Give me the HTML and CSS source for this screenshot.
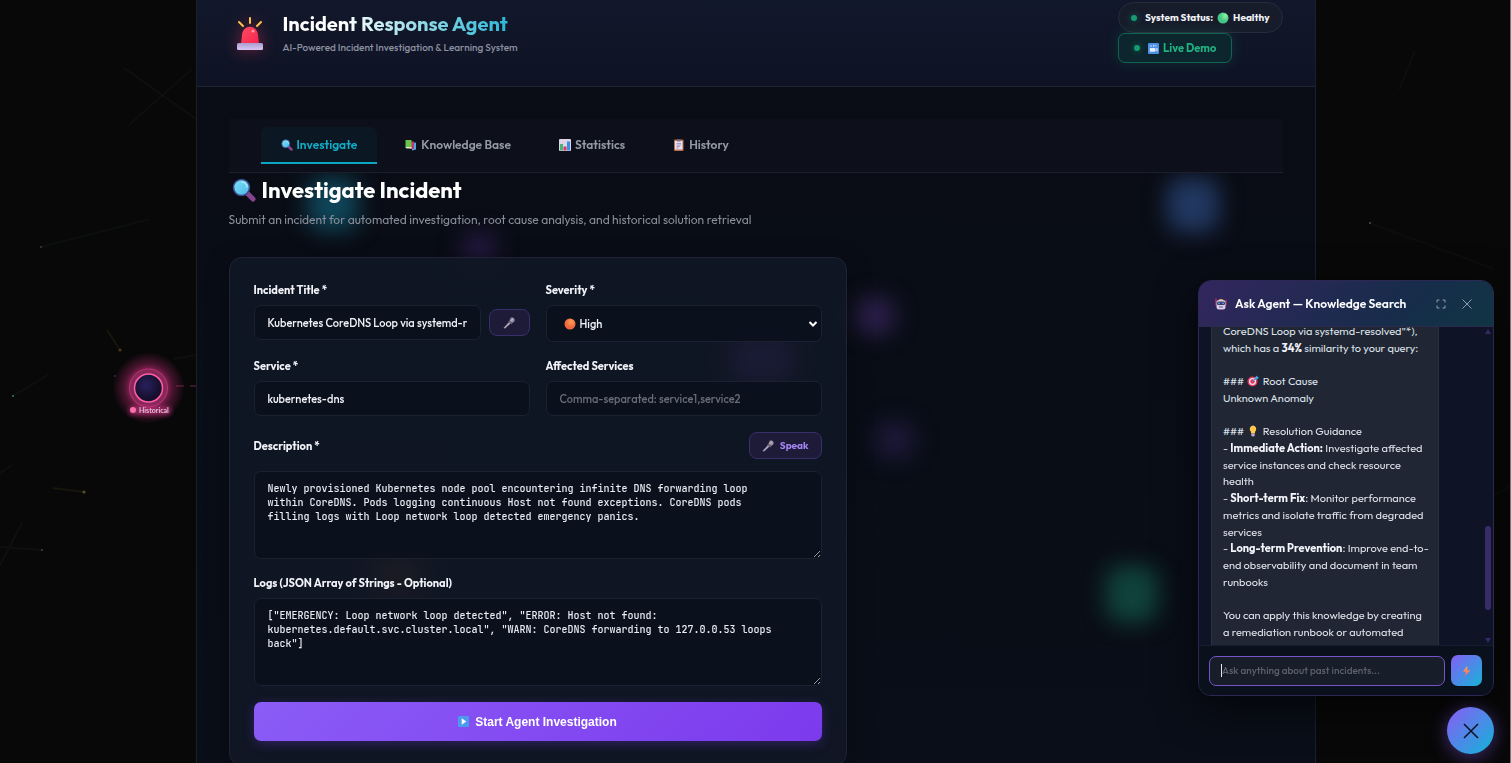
FILE: index.html
```html
<!DOCTYPE html>
<html lang="en">
<head>
<meta charset="utf-8">
<meta name="viewport" content="width=device-width, initial-scale=1">
<title>Incident Response Agent</title>
<link rel="stylesheet" href="styles.css">
</head>
<body>
<svg class="defs" aria-hidden="true">
  <defs>
    <linearGradient id="lens" x1="0" y1="0" x2="1" y2="1"><stop offset="0" stop-color="#7fe0f7"/><stop offset="1" stop-color="#4cb6ea"/></linearGradient>
    <linearGradient id="dome" x1="0" y1="0" x2="1" y2="1"><stop offset="0" stop-color="#ff4d62"/><stop offset="1" stop-color="#f5234f"/></linearGradient>
    <linearGradient id="base" x1="0" y1="0" x2="0" y2="1"><stop offset="0" stop-color="#a99bd0"/><stop offset="1" stop-color="#d9c8f3"/></linearGradient>
    <radialGradient id="greenball" cx=".7" cy=".3"><stop offset="0" stop-color="#8cf29b"/><stop offset="1" stop-color="#43c586"/></radialGradient>
    <radialGradient id="orangeball" cx=".6" cy=".3"><stop offset="0" stop-color="#ff9e55"/><stop offset="1" stop-color="#f0673c"/></radialGradient>
    <linearGradient id="bolt" x1="0" y1="0" x2="0" y2="1"><stop offset="0" stop-color="#ffb04a"/><stop offset="1" stop-color="#f2606a"/></linearGradient>
  </defs>
  <symbol id="i-search" viewBox="0 0 24 24"><path d="M15 15l6 6" stroke="#84458c" stroke-width="5" stroke-linecap="round"/><circle cx="9.500" cy="9.500" r="8" fill="url(#lens)" stroke="#3c4a8a" stroke-width="1.500"/><path d="M10 4a5 5 0 0 1 5 5" stroke="#a8edfb" stroke-width="1.500" fill="none" stroke-linecap="round"/></symbol>
  <symbol id="i-mic" viewBox="0 0 24 24"><path d="M1 22l11-12 3 3L4 23z" fill="#b3a5b9"/><path d="M10.500 9l6 6 2-3-5-5z" fill="#6c6677"/><path d="M13 6.500l5.500 5.500L23 8.500V4L19.500 1H16z" fill="#9890a1"/><path d="M15 8l6-5" stroke="#d0c8d6" stroke-width="1.500"/></symbol>
</svg>

<svg class="space" viewBox="0 0 1511 763" preserveAspectRatio="xMidYMid slice" aria-hidden="true">
  <defs>
    <radialGradient id="halo"><stop offset=".45" stop-color="#d83284" stop-opacity=".75"/><stop offset=".68" stop-color="#a52765" stop-opacity=".4"/><stop offset="1" stop-color="#a52765" stop-opacity="0"/></radialGradient>
    <radialGradient id="core" cx=".42" cy=".4"><stop offset="0" stop-color="#27205c"/><stop offset="1" stop-color="#170f2c"/></radialGradient>
    <filter id="soft" x="-30%" y="-100%" width="160%" height="300%"><feGaussianBlur stdDeviation="2"/></filter>
  </defs>
  <g fill="none" stroke-width="2">
    <path d="M124 68L196 119" stroke="#100f0c"/>
    <path d="M129 125L192 69M41 247L150 219" stroke="#0b0f0e"/>
    <path d="M107 330L120 350M53 488L84 492" stroke="#17150c"/>
    <path d="M13 396L48 375M0 473L12 465M0 547L42 550M0 565L22 523M174 359L196 355" stroke="#0e0f0e"/>
    <path d="M1415 51L1399 90M1370 223L1494 269M1494 496L1511 485" stroke="#0c0d0e"/>
    <path d="M176 386L196 386" stroke="#6d2547" stroke-width="1" stroke-dasharray="8 6"/>
  </g>
  <circle cx="13" cy="396" r="1" fill="#1c8a63"/><circle cx="120" cy="350" r="1.500" fill="#4c3c18"/><circle cx="84" cy="492" r="1.500" fill="#5b5422"/><circle cx="42" cy="550" r="1" fill="#3c443d"/><circle cx="41" cy="247" r="1" fill="#39413e"/><circle cx="115" cy="376" r="1" fill="#3a2b5c"/><circle cx="1370" cy="223" r="1" fill="#46525e"/>
  <circle cx="148.500" cy="388" r="36" fill="url(#halo)"/>
  <circle cx="148.500" cy="388" r="19" fill="#862858" stroke="#b93474"/>
  <circle cx="148.500" cy="388" r="14" fill="url(#core)" stroke="#ff5fa5" stroke-width="1.500"/>
  <rect x="129" y="406" width="42" height="9" rx="3" fill="#c8317d" opacity=".6" filter="url(#soft)"/>
  <circle cx="133" cy="410" r="3" fill="#f871ad"/>
  <text class="node-label" x="139" y="413">Historical</text>
</svg>

<div class="shell">
  <svg class="glows" viewBox="196 0 1120 763" preserveAspectRatio="xMidYMin slice" aria-hidden="true">
    <defs><filter id="haze" x="-100%" y="-100%" width="300%" height="300%" color-interpolation-filters="sRGB"><feGaussianBlur stdDeviation="11"/></filter></defs>
    <g filter="url(#haze)">
      <rect x="308" y="178" width="50" height="52" rx="14" fill="#10556c" opacity=".8"/>
      <rect x="1167" y="178" width="52" height="54" rx="14" fill="#263f6e" opacity=".85"/>
      <rect x="1106" y="566" width="52" height="56" rx="14" fill="#125045" opacity=".8"/>
      <rect x="856" y="298" width="38" height="36" rx="10" fill="#38255f" opacity=".75"/>
      <rect x="876" y="422" width="38" height="36" rx="10" fill="#2c2050" opacity=".6"/>
      <rect x="462" y="234" width="34" height="28" rx="10" fill="#34205a" opacity=".7"/>
      <rect x="732" y="334" width="60" height="48" rx="10" fill="#7848d8" opacity=".9"/>
      <rect x="372" y="556" width="52" height="40" rx="10" fill="#a0542c" opacity=".7"/>
    </g>
  </svg>

  <header class="top">
    <div class="brand">
      <svg class="siren" viewBox="0 0 28 34" aria-hidden="true"><path d="M3 5l4 4M14 1v5M25 5l-4 4" stroke="#ffc24a" stroke-width="2" stroke-linecap="round"/><path d="M5 27l1-9c1-11 15-11 16 0l1 9z" fill="url(#dome)"/><circle cx="17" cy="14" r="1.500" fill="#ff9a9d"/><rect x="1" y="26" width="26" height="7" rx="1.500" fill="url(#base)"/></svg>
      <div>
        <h1>Incident Response Agent</h1>
        <p>AI-Powered Incident Investigation &amp; Learning System</p>
      </div>
    </div>
    <div class="status">
      <div class="pill"><i class="dot"></i><span>System Status:</span><svg class="ic" viewBox="0 0 24 24" aria-hidden="true"><circle cx="12" cy="12" r="11" fill="url(#greenball)"/></svg><span>Healthy</span></div>
      <button class="demo" type="button"><i class="dot"></i><svg class="ic" viewBox="0 0 24 24" aria-hidden="true"><rect width="24" height="24" rx="2" fill="#4b8fe6"/><path d="M4 11h12v8H4z" fill="#e6eefb"/><path d="M17 12l4-1v8l-4-2zM5 5h3v3H5zM11 4h3v4h-3zM16 5h3v2h-3z" fill="#c4dafa"/></svg>Live Demo</button>
    </div>
  </header>

  <main>
    <nav class="tabs" aria-label="Sections">
      <button class="tab active" type="button"><svg class="ic" aria-hidden="true"><use href="#i-search"/></svg>Investigate</button>
      <button class="tab" type="button"><svg class="ic" viewBox="0 0 24 24" aria-hidden="true"><path d="M14 8l8-1v14l-8 2z" fill="#55a5ea"/><path d="M10 5h8v15h-8z" fill="#c03a68"/><path d="M1 2h12v16H1z" fill="#6cc24a"/><path d="M1 16h12v3H3z" fill="#d8e8d0"/></svg>Knowledge Base</button>
      <button class="tab" type="button"><svg class="ic" viewBox="0 0 24 24" aria-hidden="true"><rect width="24" height="24" rx="2" fill="#dfd3ea"/><path d="M2 10h6v13H2z" fill="#45b678"/><path d="M9 15h6v8H9z" fill="#d83660"/><path d="M16 5h6v18h-6z" fill="#3c8ee0"/></svg>Statistics</button>
      <button class="tab" type="button"><svg class="ic" viewBox="0 0 24 24" aria-hidden="true"><rect x="2" y="1" width="19" height="23" rx="2" fill="#b9704f"/><path d="M4 4h15v17H4z" fill="#e8dff0"/><path d="M8 1h7v4H8z" fill="#76708a"/><path d="M7 9h9M7 12h9M7 15h7M7 18h4" stroke="#8e83a8" stroke-width="1.500"/></svg>History</button>
    </nav>

    <h2><svg class="ic-lg" aria-hidden="true"><use href="#i-search"/></svg>Investigate Incident</h2>
    <p class="lead">Submit an incident for automated investigation, root cause analysis, and historical solution retrieval</p>

    <div class="columns">
      <form class="card">
        <div class="pair">
          <div class="field">
            <label for="title">Incident Title *</label>
            <div class="with-mic">
              <input id="title" type="text" value="Kubernetes CoreDNS Loop via systemd-resolved">
              <button class="voice" type="button" aria-label="Dictate title"><svg class="ic" aria-hidden="true"><use href="#i-mic"/></svg></button>
            </div>
          </div>
          <div class="field">
            <label for="severity">Severity *</label>
            <div class="select-wrap">
              <svg class="ic sev" viewBox="0 0 24 24" aria-hidden="true"><circle cx="12" cy="12" r="11" fill="url(#orangeball)"/></svg>
              <select id="severity"><option>High</option></select>
              <svg class="chev" viewBox="0 0 10 10" aria-hidden="true"><path d="M1.500 3L5 6.500 8.500 3" fill="none" stroke="#fff" stroke-width="2"/></svg>
            </div>
          </div>
          <div class="field">
            <label for="service">Service *</label>
            <input id="service" type="text" value="kubernetes-dns">
          </div>
          <div class="field">
            <label for="affected">Affected Services</label>
            <input id="affected" type="text" placeholder="Comma-separated: service1,service2">
          </div>
        </div>
        <div class="label-row">
          <label for="desc">Description *</label>
          <button class="voice" type="button"><svg class="ic" aria-hidden="true"><use href="#i-mic"/></svg>Speak</button>
        </div>
        <textarea id="desc">Newly provisioned Kubernetes node pool encountering infinite DNS forwarding loop
within CoreDNS. Pods logging continuous Host not found exceptions. CoreDNS pods
filling logs with Loop network loop detected emergency panics.</textarea>
        <label class="logs-label" for="logs">Logs (JSON Array of Strings - Optional)</label>
        <textarea id="logs">["EMERGENCY: Loop network loop detected", "ERROR: Host not found:
kubernetes.default.svc.cluster.local", "WARN: CoreDNS forwarding to 127.0.0.53 loops
back"]</textarea>
        <button class="start" type="button"><svg class="ic" viewBox="0 0 24 24" aria-hidden="true"><rect width="24" height="24" rx="2" fill="#4a9af0"/><path d="M8 5l10 7-10 7z" fill="#fff"/></svg>Start Agent Investigation</button>
      </form>
    </div>
  </main>
</div>

<section class="chat" aria-label="Ask Agent">
  <div class="chat-head">
    <svg class="ic" viewBox="0 0 24 24" aria-hidden="true"><path d="M2 1v14M22 4v11" stroke="#e0356a" stroke-width="2"/><path d="M7 4c1-3 9-3 10 0z" fill="#f2a04c"/><rect x="3" y="4" width="18" height="19" rx="5" fill="#d9cdea"/><rect x="4" y="7" width="16" height="7" rx="3" fill="#35406b"/><circle cx="8" cy="10.500" r="1.500" fill="#6fd6ff"/><circle cx="16" cy="10.500" r="1.500" fill="#6fd6ff"/><path d="M8 18h8" stroke="#6a5a87" stroke-width="2"/></svg>
    <h3>Ask Agent — Knowledge Search</h3>
    <button type="button" aria-label="Expand"><svg viewBox="0 0 12 12" aria-hidden="true"><path d="M2 4.500V2h2.500M7.500 2H10v2.500M10 7.500V10H7.500M4.500 10H2V7.500"/></svg></button>
    <button type="button" aria-label="Close"><svg viewBox="0 0 12 12" aria-hidden="true"><path d="M1.500 1.500l9 9M10.500 1.500l-9 9"/></svg></button>
  </div>
  <div class="chat-body">
    <div class="bubble">CoreDNS Loop via systemd-resolved"*),
which has a <b>34%</b> similarity to your query:

### <svg class="em" viewBox="0 0 24 24" aria-hidden="true"><circle cx="11" cy="13" r="10" fill="#e0355f"/><circle cx="11" cy="13" r="7" fill="#f5e3ee"/><circle cx="11" cy="13" r="4.500" fill="#e0355f"/><path d="M11 13l7-7" stroke="#2b9bd8" stroke-width="2"/><path d="M16 5l4-4 1 3 3 1-4 4h-4z" fill="#37aee8"/></svg> Root Cause
Unknown Anomaly

### <svg class="em" viewBox="0 0 24 24" aria-hidden="true"><path d="M12 1a7.500 7.500 0 0 1 4 13v3H8v-3a7.500 7.500 0 0 1 4-13z" fill="#ffc94d"/><path d="M8.500 17h7v4l-2 2h-3l-2-2z" fill="#b5a4c4"/></svg> Resolution Guidance
- <b>Immediate Action:</b> Investigate affected
service instances and check resource
health
- <b>Short-term Fix</b>: Monitor performance
metrics and isolate traffic from degraded
services
- <b>Long-term Prevention</b>: Improve end-to-
end observability and document in team
runbooks

You can apply this knowledge by creating
a remediation runbook or automated</div>
    <div class="rail" aria-hidden="true"><i class="up"></i><i class="thumb"></i><i class="down"></i></div>
  </div>
  <div class="chat-foot">
    <div class="ask"><input type="text" aria-label="Question" placeholder="Ask anything about past incidents..."></div>
    <button class="send" type="button" aria-label="Send"><svg viewBox="0 0 12 16" aria-hidden="true"><path d="M7 1L1 9h4l-1 6 7-8H7z" fill="url(#bolt)"/></svg></button>
  </div>
</section>
<button class="fab" type="button" aria-label="Close chat"><svg viewBox="0 0 16 16" aria-hidden="true"><path d="M1 1l14 14M15 1L1 15" stroke="#0c1020" stroke-width="1.500"/></svg></button>
</body>
</html>
```
FILE: styles.css
```css
* { box-sizing: border-box; }

body {
  margin: 0;
  height: 100vh;
  overflow: hidden;
  background: #080808;
  color: #f1f3f8;
  font: 12px/16px Outfit, Lato, sans-serif;
}
body::after {
  content: "";
  position: fixed;
  inset: 0 0 0 auto;
  width: 1px;
  background: #77797a;
}

button, input, select { font: inherit; color: inherit; }
button { cursor: pointer; }
h1, h2, h3, p { margin: 0; }

.defs { position: absolute; width: 0; height: 0; }
.space { position: fixed; inset: 0; width: 100%; height: 100%; }
.node-label { font: bold 7px Lato, sans-serif; fill: #e3bfdc; }
.ic { width: 12px; height: 12px; flex: none; }
.ic-lg { width: 24px; height: 24px; flex: none; }

.shell {
  position: relative;
  isolation: isolate;
  max-width: 1120px;
  height: 100vh;
  margin: 0 auto;
  overflow: hidden;
  background: linear-gradient(180deg, #0a0c15, #090d16 50%, #0a0e18);
  border: solid #1b1f2b;
  border-width: 0 1px;
}
.glows { position: absolute; inset: 0; width: 100%; height: 100%; z-index: -1; }

.top {
  display: flex;
  justify-content: space-between;
  align-items: flex-start;
  padding: 2px 32px 23px;
  background: linear-gradient(180deg, #12182b, #0e1324);
  border-bottom: 1px solid #202536;
}
.brand { display: flex; align-items: center; gap: 19px; padding: 8px 0 0 7px; }
.siren { width: 28px; height: 34px; filter: drop-shadow(0 0 8px rgba(240, 50, 90, .45)); }
.brand h1 {
  font-size: 20px;
  line-height: 28px;
  font-weight: 700;
  background: linear-gradient(90deg, #fff 25%, #7fd4e3 65%, #22b2d4);
  -webkit-background-clip: text;
  background-clip: text;
  color: transparent;
}
.brand p { font-size: 10px; line-height: 20px; font-weight: 500; color: #8b90a0; }

.status { display: flex; flex-direction: column; align-items: flex-start; }
.pill, .demo { display: flex; align-items: center; font-weight: 700; line-height: 14px; }
.pill {
  gap: 4px;
  padding: 7px 12px;
  height: 31px;
  border: 1px solid #262c3b;
  border-radius: 16px;
  background: #171c2a;
  font-size: 10px;
}
.dot { width: 6px; height: 6px; border-radius: 50%; background: #159a72; box-shadow: 0 0 6px #0d6b50; }
.pill .dot { margin-right: 4px; }
.demo {
  gap: 4px;
  height: 30px;
  padding: 0 15px;
  border: 1px solid #12644f;
  border-radius: 7px;
  background: #0d262d;
  color: #20b183;
  font-size: 11px;
  box-shadow: 0 0 14px rgba(16, 185, 129, .18);
}
.demo .dot { margin-right: 4px; }
.demo .ic { width: 11px; height: 11px; }

main { padding: 32px; }
.tabs {
  display: flex;
  gap: 8px;
  padding: 8px 32px;
  background: #0d101b;
  border-bottom: 1px solid #1b1f2b;
}
.tab {
  display: flex;
  align-items: center;
  gap: 4px;
  height: 37px;
  padding: 0 20px;
  border: 0;
  border-bottom: 2px solid transparent;
  border-radius: 7px 7px 0 0;
  background: none;
  color: #9599a6;
  font-size: 12px;
  font-weight: 600;
}
.tab.active { color: #12adc8; background: #0b1824; border-color: #0ca6c4; }

h2 { display: flex; align-items: center; gap: 6px; padding: 4px 0 0 3px; font-size: 22px; line-height: 26px; font-weight: 700; color: #fff; }
.lead { margin: 8px 0 28px; font-size: 12px; line-height: 18px; color: #8b8f9b; }

.columns { display: grid; grid-template-columns: 3fr 2fr; gap: 24px; }
.card {
  padding: 24px;
  background: rgba(17, 23, 37, .9);
  border: 1px solid #1e2433;
  border-radius: 13px;
  box-shadow: 0 6px 24px rgba(0, 0, 0, .35);
}
.pair { display: grid; grid-template-columns: 1fr 1fr; gap: 16px; }
.field { display: flex; flex-direction: column; gap: 7px; min-width: 0; }
label { font-size: 11px; font-weight: 700; line-height: 16px; }
.card input, .card select, textarea {
  width: 100%;
  background: rgba(10, 15, 28, .85);
  border: 1px solid #1b2130;
  border-radius: 7px;
  outline: 0;
}
.card input, .card select { font-size: 11px; font-weight: 500; }
.card input { height: 35px; padding: 0 13px; min-width: 0; }
::placeholder { color: #686d79; opacity: 1; }
.with-mic { display: flex; align-items: center; gap: 8px; }
.voice {
  display: flex;
  align-items: center;
  justify-content: center;
  gap: 6px;
  flex: none;
  height: 27px;
  min-width: 41px;
  padding: 0 12px;
  border: 1px solid #38306a;
  border-radius: 8px;
  background: #1d1b38;
  color: #a383f2;
  font-size: 10px;
  font-weight: 700;
}
.select-wrap { display: grid; align-items: center; }
.select-wrap > * { grid-area: 1 / 1; }
.card select { height: 37px; padding: 0 13px 0 33px; appearance: none; }
.sev { margin-left: 18px; z-index: 1; }
.chev { width: 10px; height: 10px; justify-self: end; margin-right: 4px; pointer-events: none; }

.label-row { display: flex; justify-content: space-between; align-items: center; margin: 16px 0 12px; }
textarea {
  display: block;
  height: 88px;
  padding: 10px 13px;
  color: #e9ecf2;
  font: 500 10px/14px "JetBrains Mono", "DejaVu Sans Mono", monospace;
  resize: vertical;
}
.logs-label { display: block; margin: 16px 0 7px; }
.start {
  display: flex;
  align-items: center;
  justify-content: center;
  gap: 6px;
  width: 100%;
  height: 39px;
  margin-top: 16px;
  border: 0;
  border-radius: 7px;
  background: linear-gradient(135deg, #8b5cf6, #7c3aed);
  color: #fff;
  font: bold 12px/16px "Liberation Sans", sans-serif;
  box-shadow: 0 3px 12px rgba(124, 58, 237, .3);
}
.start .ic { width: 11px; height: 11px; }

.chat {
  position: fixed;
  right: 17px;
  bottom: 67px;
  width: 296px;
  height: 416px;
  display: flex;
  flex-direction: column;
  overflow: hidden;
  border: 1px solid #2c2753;
  border-radius: 13px;
  background: #0e1425;
  box-shadow: 0 12px 40px rgba(0, 0, 0, .6);
}
.chat-head {
  display: flex;
  align-items: center;
  gap: 8px;
  height: 46px;
  flex: none;
  padding: 0 20px 0 16px;
  background: linear-gradient(135deg, #33265e, #182c4b 65%, #103544);
  border-bottom: 1px solid #2b2b50;
}
.chat-head h3 { flex: 1; font-size: 12px; line-height: 16px; font-weight: 600; color: #fff; white-space: nowrap; }
.chat-head button { display: flex; padding: 0; border: 0; background: none; }
.chat-head button + button { margin-left: 6px; }
.chat-head button svg { width: 12px; height: 12px; fill: none; stroke: #929bad; stroke-width: 1; }
.chat-body { flex: 1; min-height: 0; display: flex; justify-content: space-between; overflow: hidden; padding-left: 12px; }
.bubble {
  width: 228px;
  margin-top: -4px;
  padding: 0 11px;
  background: #202634;
  border: solid #2a303e;
  border-width: 0 1px;
  color: #dce0e8;
  font-size: 11px;
  line-height: 1.52;
  white-space: pre;
}
.bubble b { color: #f3f5fa; }
.em { width: 12px; height: 12px; margin: 0 1px; vertical-align: -2px; }
.rail { display: flex; flex-direction: column; align-items: center; width: 6px; margin-right: 2px; padding: 2px 0; }
.up, .down { border: 3px solid transparent; border-top: 0; border-bottom: 5px solid #332a63; }
.down { border-bottom: 0; border-top: 5px solid #332a63; margin-top: auto; }
.thumb { width: 6px; height: 84px; margin-top: 192px; border-radius: 3px; background: #372b68; }
.chat-foot { display: flex; align-items: center; gap: 6px; flex: none; height: 50px; padding: 0 11px 0 10px; background: #0b101d; border-top: 1px solid #171d30; }
.ask { position: relative; flex: 1; }
.ask::before { content: ""; position: absolute; left: 12px; top: 8px; width: 1px; height: 13px; background: #e5e7ee; }
.ask input { display: block; width: 100%; height: 30px; padding: 0 12px; border: 1px solid #7553c9; border-radius: 7px; outline: 0; background: #171d29; font-size: 10px; font-weight: 500; }
.ask input::placeholder { color: #5c616d; }
.send {
  display: grid;
  place-items: center;
  width: 31px;
  height: 31px;
  padding: 0;
  border: 0;
  border-radius: 7px;
  background: linear-gradient(135deg, #855ef7, #15b4d8);
}
.send svg { width: 9px; height: 12px; }
.fab {
  position: fixed;
  right: 17px;
  bottom: 9px;
  display: grid;
  place-items: center;
  width: 47px;
  height: 47px;
  padding: 0;
  border: 0;
  border-radius: 50%;
  background: linear-gradient(135deg, #8b5cf6, #10b5d8);
  box-shadow: 0 3px 18px rgba(139, 92, 246, .45);
}
.fab svg { width: 16px; height: 16px; }
```
